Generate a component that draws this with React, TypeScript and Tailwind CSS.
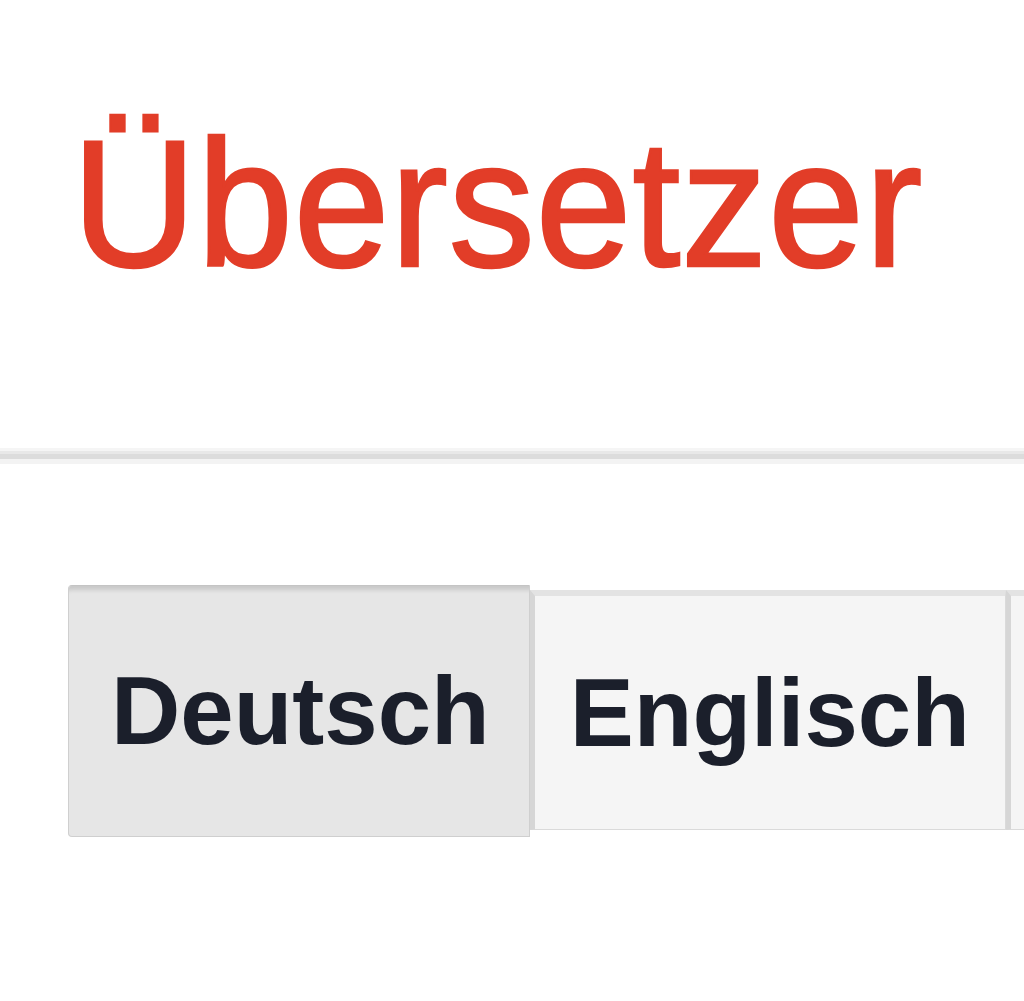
import React from 'react';

const languages = ['Deutsch', 'Englisch', ''];

export default function App() {
  const active = 'Deutsch';

  return (
    <div className="w-[1024px] h-[1001px] bg-white overflow-hidden font-['Liberation_Sans',Arial,sans-serif]">
      {/* header title */}
      <div className="pt-[121px] pl-[72px]">
        <h1 className="text-[172px] leading-none font-normal tracking-[1px] text-[#e23d28] [-webkit-text-stroke:2.5px_#e23d28] scale-y-[1.05] origin-bottom">
          Übersetzer
        </h1>
      </div>

      {/* divider */}
      <div className="mt-[155px] h-[16px] flex flex-col">
        <div className="h-[3px] bg-[#f5f5f5]" />
        <div className="h-[3px] bg-[#e8e8e8]" />
        <div className="h-[5px] bg-[#dcdcdc]" />
        <div className="h-[5px] bg-[#f3f3f3]" />
      </div>

      {/* language picker */}
      <div className="mt-[121px] pl-[68px] flex whitespace-nowrap">
        {languages.map((lang) => {
          const isActive = lang === active;
          return (
            <button
              key={lang || 'more'}
              className={
                isActive
                  ? 'h-[252px] shrink-0 flex items-center pl-[42px] pr-[39px] bg-[#e6e6e6] border border-[#cfcfcf] border-t-[#c4c4c4] rounded-l-[4px] shadow-[inset_0_10px_4px_-6px_rgba(0,0,0,0.13)]'
                  : 'h-[240px] mt-[5px] shrink-0 flex items-center pl-[35px] pr-[35px] min-w-[40px] bg-[#f5f5f5] border border-[#dadada] border-l-[5px] border-l-[#d6d6d6] border-t-[6px] border-t-[#e3e3e3]'
              }
            >
              <span className="text-[96px] leading-none font-bold text-[#1b1f2b]">{lang}</span>
            </button>
          );
        })}
      </div>
    </div>
  );
}
